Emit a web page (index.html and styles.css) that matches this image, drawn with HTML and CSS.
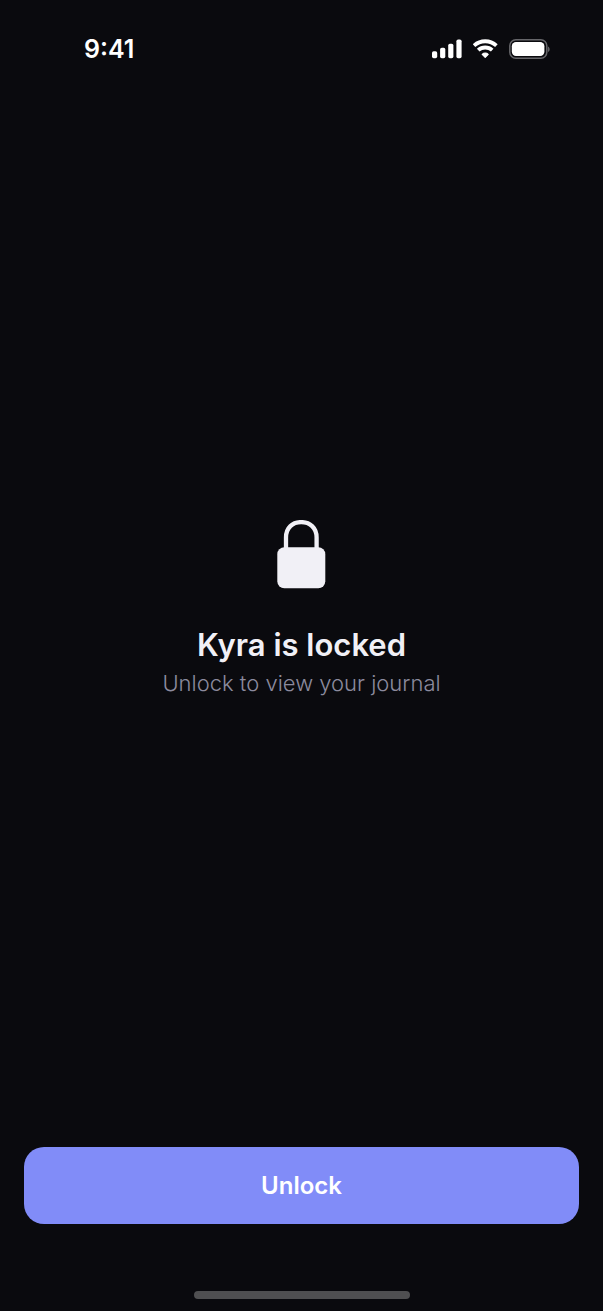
FILE: index.html
```
<!DOCTYPE html>
<html lang="en">
<head>
    <meta charset="UTF-8">
    <meta name="viewport" content="width=device-width, initial-scale=1.0">
    <title>Kyra</title>
    <link rel="stylesheet" href="styles.css">
</head>
<body>

    <!-- Status bar -->
    <header class="status-bar">
        <time class="clock">9:41</time>
        <div class="status-icons">
            <svg width="31" height="20" viewBox="0 0 31 20" fill="#fff" aria-hidden="true">
                <rect x="0" y="12.3" width="5.2" height="7" rx="1.7"/>
                <rect x="8.1" y="8.7" width="5.2" height="10.6" rx="1.7"/>
                <rect x="16.2" y="4.8" width="5.2" height="14.5" rx="1.7"/>
                <rect x="24.4" y="0.5" width="5.2" height="18.8" rx="1.7"/>
            </svg>
            <svg width="26" height="20" viewBox="0 0 26 20" fill="none" stroke="#fff" stroke-width="3.8" aria-hidden="true">
                <path d="M1 6.6a16.6 16.6 0 0 1 22.4 0"/>
                <path d="M5.2 11.2a10.4 10.4 0 0 1 14 0"/>
                <path d="M12.2 18.4l-3-3a4.3 4.3 0 0 1 6 0z" fill="#fff" stroke-width="1.2" stroke-linejoin="round"/>
            </svg>
            <svg width="42" height="20" viewBox="0 0 42 20" aria-hidden="true">
                <rect x="0.8" y="0.8" width="37" height="18.4" rx="6" fill="none" stroke="#66666a" stroke-width="1.5"/>
                <rect x="2.8" y="3" width="32.6" height="14" rx="4.2" fill="#fff"/>
                <path d="M39.2 7.4c1.8 1 1.8 4.6 0 5.6z" fill="#77777a"/>
            </svg>
        </div>
    </header>

    <!-- Lock message -->
    <main class="locked">
        <svg class="lock" width="49" height="69" viewBox="0 0 49 69" aria-hidden="true">
            <path d="M9 30V17.5C9 7.6 15.6 2.1 24.2 2.1S39.6 7.6 39.6 17.5V30" fill="none" stroke="#f1f0f6" stroke-width="4.3"/>
            <rect x="0.3" y="27.2" width="48" height="41" rx="7" fill="#f1f0f6"/>
        </svg>
        <h1>Kyra is locked</h1>
        <p>Unlock to view your journal</p>
    </main>

    <!-- Unlock button and home indicator -->
    <footer class="actions">
        <button type="button" id="unlock">Unlock</button>
        <div class="home-indicator"></div>
    </footer>

</body>
</html>
```
FILE: styles.css
```
* {
    box-sizing: border-box;
}
body {
    margin: 0;
    min-height: 100vh;
    display: flex;
    flex-direction: column;
    background-color: #0a0a0e;
    color: #f1f0f6;
    font-family: Inter, "Liberation Sans", sans-serif;
}
.status-bar {
    display: flex;
    align-items: center;
    justify-content: space-between;
    height: 98px;
    padding: 0 52px 0 84px;
}
.clock {
    color: #fff;
    font-size: 25px;
    font-weight: 600;
}
.status-icons {
    display: flex;
    gap: 10px;
}
.locked {
    flex: 1;
    display: flex;
    flex-direction: column;
    align-items: center;
    justify-content: center;
    text-align: center;
}
.lock {
    margin-bottom: 36px;
}
h1 {
    margin: 0;
    font-size: 31px;
    font-weight: 600;
    line-height: 40px;
}
p {
    margin: 0;
    color: #8c8a9e;
    font-size: 22px;
    font-weight: 300;
    line-height: 36px;
}
.actions {
    padding: 24px 24px 12px;
}
#unlock {
    display: block;
    width: 100%;
    height: 77px;
    margin-bottom: 67px;
    border: 0;
    border-radius: 20px;
    background-color: #818cf8;
    color: #fff;
    font-family: inherit;
    font-size: 24px;
    font-weight: 600;
}
.home-indicator {
    width: 216px;
    height: 8px;
    margin: 0 auto;
    border-radius: 4px;
    background-color: #4f4f51;
}
```
